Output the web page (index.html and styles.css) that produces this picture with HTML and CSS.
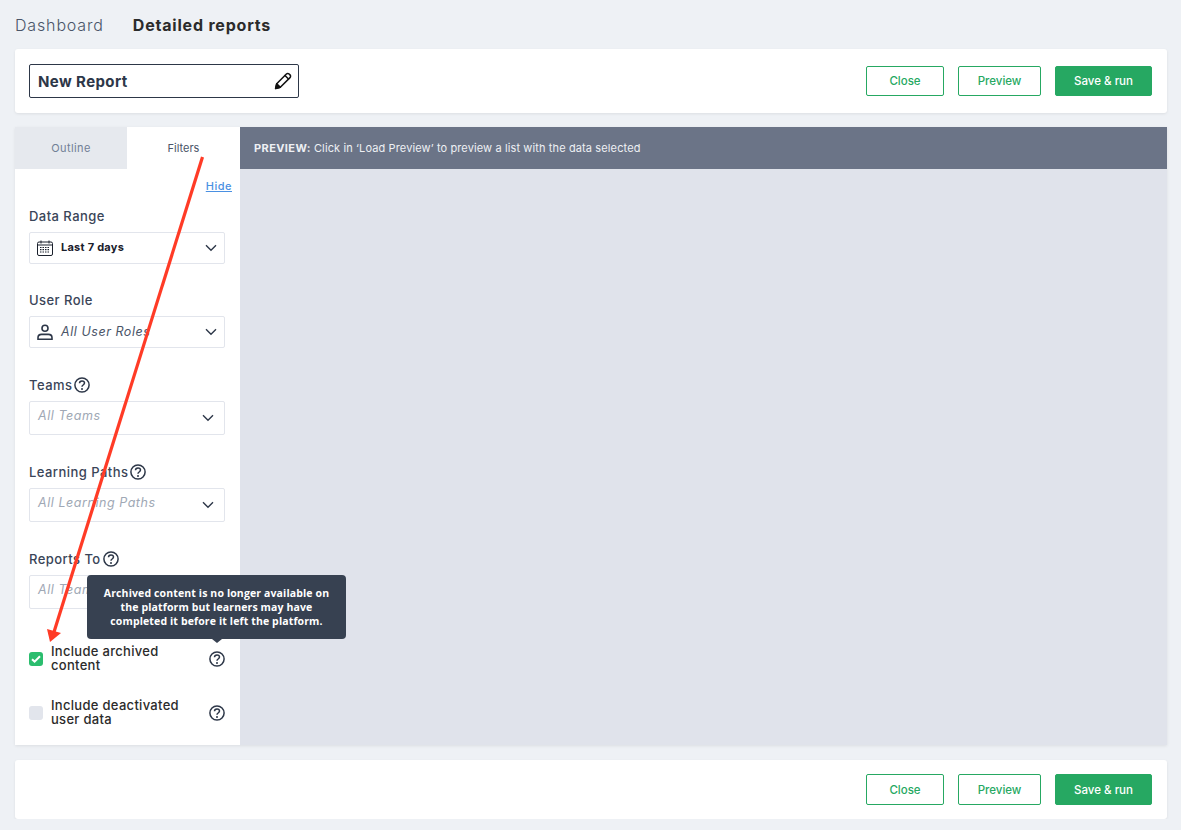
FILE: index.html
```html
<!DOCTYPE html>
<html lang="en">
<head>
  <meta charset="UTF-8">
  <meta name="viewport" content="width=device-width, initial-scale=1.0">
  <title>Detailed reports</title>
  <link rel="stylesheet" href="styles.css">
</head>
<body>
  <div class="page">
    <!-- Page tabs -->
    <nav class="page-tabs">
      <span class="page-tab">Dashboard</span>
      <span class="page-tab active">Detailed reports</span>
    </nav>

    <!-- Report name -->
    <div class="card top-card">
      <div class="name-input">
        <span>New Report</span>
        <svg class="pencil" viewBox="0 0 18 18" width="18" height="18" fill="none" stroke="#111" stroke-width="1.5" stroke-linejoin="round" stroke-linecap="round">
          <path d="M1.6 16.4l1.1-4.7L12.4 2a1.9 1.9 0 0 1 2.7 0l.9.9a1.9 1.9 0 0 1 0 2.7l-9.7 9.7z"/>
          <path d="M11 3.5l3.5 3.5M2.7 11.7l3.6 3.6"/>
          <path d="M1.6 16.4l1-4 3 3z" fill="#111"/>
        </svg>
      </div>
      <div class="actions">
        <button class="btn btn-close">Close</button>
        <button class="btn btn-preview">Preview</button>
        <button class="btn btn-save">Save &amp; run</button>
      </div>
    </div>

    <!-- Main panel -->
    <div class="main">
      <aside class="sidebar">
        <div class="side-tabs">
          <div class="side-tab">Outline</div>
          <div class="side-tab active">Filters</div>
        </div>
        <div class="filters">
          <a class="hide-link" href="#">Hide</a>

          <div class="filter first">
            <label class="filter-label">Data Range</label>
            <div class="select">
              <svg class="select-icon" viewBox="0 0 16 16" width="16" height="16" fill="none" stroke="#1a202c" stroke-width="1">
                <rect x="0.5" y="2" width="15" height="13.5" rx="1.5"/>
                <path d="M0.5 5h15M4 0.5v3M12 0.5v3"/>
                <path d="M3 7.5h10M3 9.7h10M3 12h10" stroke-dasharray="1.5 1" stroke-width="1.2"/>
              </svg>
              <span class="select-value bold">Last 7 days</span>
              <svg class="chevron" viewBox="0 0 12 8" width="12" height="8"><path d="M1 1.2l5 5 5-5" fill="none" stroke="#2d3748" stroke-width="1.4"/></svg>
            </div>
          </div>

          <div class="filter second">
            <label class="filter-label">User Role</label>
            <div class="select">
              <svg class="select-icon" viewBox="0 0 16 16" width="16" height="16" fill="none" stroke="#2d3748" stroke-width="1.6">
                <circle cx="8" cy="4.2" r="3"/>
                <path d="M1 15.2v-1.4c0-2 1.6-3.4 3.6-3.4h6.8c2 0 3.6 1.4 3.6 3.4v1.4z"/>
              </svg>
              <span class="select-value italic">All User Roles</span>
              <svg class="chevron" viewBox="0 0 12 8" width="12" height="8"><path d="M1 1.2l5 5 5-5" fill="none" stroke="#2d3748" stroke-width="1.4"/></svg>
            </div>
          </div>

          <div class="filter">
            <label class="filter-label">Teams
              <svg class="help" viewBox="0 0 16 16" width="16" height="16"><use href="#help-icon"/></svg>
            </label>
            <div class="select tall">
              <span class="select-value placeholder">All Teams</span>
              <svg class="chevron" viewBox="0 0 12 8" width="12" height="8"><path d="M1 1.2l5 5 5-5" fill="none" stroke="#2d3748" stroke-width="1.4"/></svg>
            </div>
          </div>

          <div class="filter">
            <label class="filter-label">Learning Paths
              <svg class="help" viewBox="0 0 16 16" width="16" height="16"><use href="#help-icon"/></svg>
            </label>
            <div class="select tall">
              <span class="select-value placeholder">All Learning Paths</span>
              <svg class="chevron" viewBox="0 0 12 8" width="12" height="8"><path d="M1 1.2l5 5 5-5" fill="none" stroke="#2d3748" stroke-width="1.4"/></svg>
            </div>
          </div>

          <div class="filter">
            <label class="filter-label">Reports To
              <svg class="help" viewBox="0 0 16 16" width="16" height="16"><use href="#help-icon"/></svg>
            </label>
            <div class="select tall">
              <span class="select-value placeholder">All Teams</span>
            </div>
          </div>

          <div class="check-row first-check">
            <span class="checkbox checked">
              <svg viewBox="0 0 10 8" width="10" height="8"><path d="M1 4.2l2.6 2.4L9 1.2" fill="none" stroke="#fff" stroke-width="2"/></svg>
            </span>
            <span class="check-label">Include archived content</span>
            <svg class="help" viewBox="0 0 16 16" width="16" height="16"><use href="#help-icon"/></svg>
          </div>
          <div class="check-row">
            <span class="checkbox"></span>
            <span class="check-label">Include deactivated user data</span>
            <svg class="help" viewBox="0 0 16 16" width="16" height="16"><use href="#help-icon"/></svg>
          </div>
        </div>
      </aside>

      <section class="preview">
        <div class="preview-bar"><b>PREVIEW:</b> Click in ‘Load Preview’ to preview a list with the data selected</div>
      </section>

      <!-- Tooltip over the filters -->
      <div class="tooltip">Archived content is no longer available on the platform but learners may have completed it before it left the platform.</div>
    </div>

    <!-- Bottom actions -->
    <div class="card bottom-card">
      <div class="actions">
        <button class="btn btn-close">Close</button>
        <button class="btn btn-preview">Preview</button>
        <button class="btn btn-save">Save &amp; run</button>
      </div>
    </div>
  </div>

  <!-- Red annotation arrow -->
  <svg class="arrow" viewBox="0 0 240 540" width="240" height="540">
    <path d="M187.5 17L39 492" stroke="#ff3b26" stroke-width="3.2" fill="none"/>
    <path d="M35 502L32 489L46 493z" fill="#ff3b26"/>
  </svg>

  <svg class="defs" width="0" height="0">
    <symbol id="help-icon" viewBox="0 0 16 16">
      <circle cx="8" cy="8" r="7.1" fill="none" stroke="#2d3748" stroke-width="1.5"/>
      <path d="M5.5 6.2c0-1.4 1.2-2.3 2.5-2.3s2.5.8 2.5 2.2c0 1.9-2.5 1.9-2.5 3.6" fill="none" stroke="#2d3748" stroke-width="1.5"/>
      <circle cx="8" cy="12" r="1" fill="#2d3748"/>
    </symbol>
  </svg>
</body>
</html>
```

FILE: styles.css
```css
body {
  font-family: 'Inter', sans-serif;
  margin: 0;
  padding: 0;
  background-color: #eef1f5;
  color: #2d3748;
  overflow: hidden;
}
.page {
  padding: 0 14px 0 15px;
}
.page-tabs {
  display: flex;
  align-items: center;
  gap: 29px;
  height: 49px;
  padding-bottom: 0;
  box-sizing: border-box;
}
.page-tab {
  font-size: 16px;
  font-weight: 300;
  color: #4a5568;
  letter-spacing: 0.85px;
}
.page-tab.active {
  font-weight: 700;
  color: #2b2b2b;
  letter-spacing: 0.8px;
}
.card {
  background: #ffffff;
  border-radius: 3px;
  box-shadow: 0 1px 3px rgba(0, 0, 0, 0.08);
  display: flex;
  align-items: center;
  justify-content: space-between;
  box-sizing: border-box;
}
.top-card {
  height: 64px;
  padding: 0 15px 0 14px;
}
.bottom-card {
  height: 59px;
  margin-top: 15px;
  padding: 0 15px 0 14px;
  justify-content: flex-end;
}
.name-input {
  width: 270px;
  height: 34px;
  box-sizing: border-box;
  border: 1px solid #2d3748;
  border-radius: 2px;
  display: flex;
  align-items: center;
  justify-content: space-between;
  padding: 0 6px 0 8px;
  font-size: 15px;
  font-weight: 700;
  letter-spacing: 0.4px;
}
.actions {
  display: flex;
  gap: 14px;
}
.btn {
  height: 30px;
  box-sizing: border-box;
  border: 1px solid #26a862;
  border-radius: 2px;
  background: #ffffff;
  color: #26a862;
  font-family: 'Inter', sans-serif;
  font-size: 11.5px;
  font-weight: 500;
  padding: 0;
}
.bottom-card .btn {
  height: 31px;
}
.btn-close {
  width: 78px;
}
.btn-preview {
  width: 83px;
}
.btn-save {
  width: 97px;
  background: #26a862;
  color: #ffffff;
}
.main {
  position: relative;
  display: flex;
  height: 618px;
  margin-top: 14px;
  box-shadow: 0 1px 3px rgba(0, 0, 0, 0.08);
}
.sidebar {
  width: 225px;
  flex-shrink: 0;
  background: #ffffff;
}
.side-tabs {
  display: flex;
  height: 42px;
}
.side-tab {
  width: 112px;
  display: flex;
  align-items: center;
  justify-content: center;
  font-size: 11px;
  letter-spacing: 0.4px;
  color: #718096;
  background: #e6e9ee;
}
.side-tab.active {
  width: 113px;
  background: #ffffff;
  color: #4a5568;
  letter-spacing: 0;
}
.filters {
  display: flex;
  flex-direction: column;
  padding: 0 15px 0 14px;
}
.hide-link {
  align-self: flex-end;
  margin: 10px -7px 0 0;
  font-size: 11px;
  line-height: 14px;
  font-weight: 500;
  letter-spacing: 0.5px;
  color: #4a90e2;
}
.filter {
  margin-top: 28px;
}
.filter.first {
  margin-top: 14px;
}
.filter.second {
  margin-top: 27px;
}
.filter-label {
  display: flex;
  align-items: center;
  gap: 2px;
  height: 18px;
  margin-bottom: 7px;
  font-size: 13px;
  font-weight: 500;
  letter-spacing: 0.45px;
  color: #3a4558;
}
.select {
  height: 32px;
  box-sizing: border-box;
  border: 1px solid #e2e5ec;
  border-radius: 2px;
  display: flex;
  align-items: center;
  padding: 0 7px 0 7px;
}
.select.tall {
  height: 34px;
  padding-left: 8px;
  padding-right: 10px;
}
.select-icon {
  margin-right: 8px;
  flex-shrink: 0;
}
.select-value {
  flex: 1;
  padding-bottom: 2px;
  font-size: 12.5px;
  letter-spacing: 0.55px;
  white-space: nowrap;
}
.tall .select-value {
  padding-bottom: 6px;
}
.select-value.bold {
  font-size: 11px;
  font-weight: 700;
  letter-spacing: 0.25px;
  color: #1a202c;
}
.select-value.italic {
  font-style: italic;
  color: #4a5568;
}
.select-value.placeholder {
  font-style: italic;
  color: #a0a8b5;
}
.chevron {
  flex-shrink: 0;
}
.help {
  flex-shrink: 0;
}
.check-row {
  display: flex;
  align-items: center;
  height: 28px;
  margin-top: 26px;
}
.first-check {
  margin-top: 36px;
}
.checkbox {
  width: 14px;
  height: 14px;
  flex-shrink: 0;
  border-radius: 3px;
  background: #e2e5ec;
  display: flex;
  align-items: center;
  justify-content: center;
  margin-right: 8px;
}
.checkbox.checked {
  background: #2bbd6e;
}
.check-label {
  flex: 1;
  font-size: 13px;
  line-height: 14px;
  font-weight: 500;
  letter-spacing: 0.3px;
  color: #2b2b2b;
  padding-right: 22px;
  padding-bottom: 2px;
}
.preview {
  flex: 1;
  background: #e0e3eb;
}
.preview-bar {
  height: 42px;
  line-height: 42px;
  padding-left: 14px;
  background: #6b7487;
  color: #eef0f4;
  font-size: 11px;
  letter-spacing: 0.12px;
  white-space: pre;
}
.preview-bar b {
  letter-spacing: 0.4px;
}
.tooltip {
  position: absolute;
  left: 72px;
  top: 448px;
  width: 259px;
  height: 64px;
  box-sizing: border-box;
  padding: 11px 10px 0;
  background: #374151;
  border-radius: 4px;
  color: #ffffff;
  font-family: 'Open Sans', sans-serif;
  font-size: 10.5px;
  line-height: 14px;
  font-weight: 700;
  letter-spacing: 0.13px;
  text-align: center;
}
.tooltip::after {
  content: "";
  position: absolute;
  left: 125px;
  bottom: -4px;
  border-left: 5px solid transparent;
  border-right: 5px solid transparent;
  border-top: 4px solid #374151;
}
.arrow {
  position: absolute;
  left: 15px;
  top: 140px;
  pointer-events: none;
}
.defs {
  position: absolute;
}
```
